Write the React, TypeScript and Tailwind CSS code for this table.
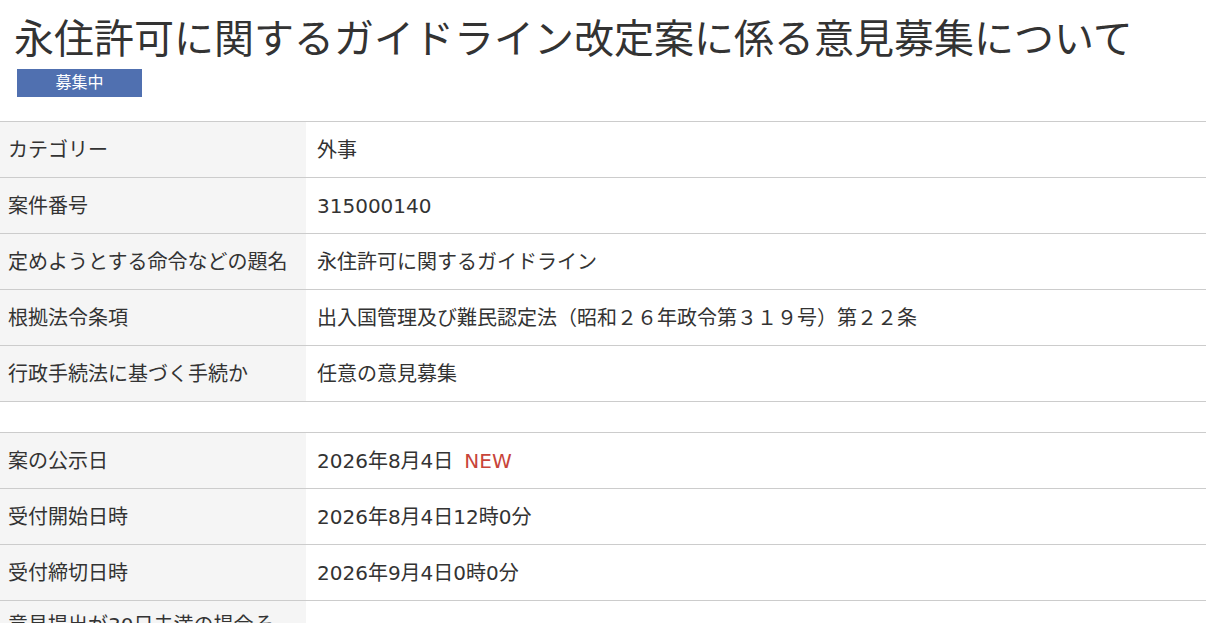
const font = {
  fontFamily: '"DejaVu Sans", "Noto Sans CJK JP", sans-serif',
};

type Row = { key: string; label: React.ReactNode; value: React.ReactNode };

const basic: Row[] = [
  { key: "cat", label: "カテゴリー", value: "外事" },
  { key: "no", label: "案件番号", value: "315000140" },
  { key: "title", label: "定めようとする命令などの題名", value: "永住許可に関するガイドライン" },
  { key: "law", label: "根拠法令条項", value: "出入国管理及び難民認定法（昭和２６年政令第３１９号）第２２条" },
  { key: "proc", label: "行政手続法に基づく手続か", value: "任意の意見募集" },
];

const dates: Row[] = [
  {
    key: "pub",
    label: "案の公示日",
    value: (
      <>
        2026年8月4日<span className="ml-[11px] text-[#c8443a]">NEW</span>
      </>
    ),
  },
  { key: "start", label: "受付開始日時", value: "2026年8月4日12時0分" },
  { key: "end", label: "受付締切日時", value: "2026年9月4日0時0分" },
  {
    key: "reason",
    label: (
      <>
        意見提出が30日未満の場合そ
        <br />
        の理由
      </>
    ),
    value: "",
  },
];

const Table = ({ rows }: { rows: Row[] }) => (
  <div className="border-t border-[#cccccc]">
    {rows.map((r) => (
      <div key={r.key} className="flex border-b border-[#cccccc] min-h-[56px]">
        <div className="w-[306px] shrink-0 bg-[#f5f5f5] pl-[8px] pr-[2px] py-[10px] flex items-center text-[20px] leading-[28px]">
          <span>{r.label}</span>
        </div>
        <div className="flex-1 pl-[11px] pr-2 py-[10px] flex items-center text-[20px] leading-[28px]">
          {r.value}
        </div>
      </div>
    ))}
  </div>
);

const App = () => {
  return (
    <div className="bg-white text-[#333333] min-h-screen" style={font}>
      <div className="pl-[14px] pt-[12px]">
        <h1
          className="text-[40px] leading-[48px] font-normal whitespace-nowrap"
          style={{ fontFamily: '"Noto Sans CJK JP", sans-serif' }}
        >
          永住許可に関するガイドライン改定案に係る意見募集について
        </h1>
        <div className="mt-[9px] ml-[3px] w-[125px] h-[28px] bg-[#5070b0] text-white text-[16px] leading-[28px] text-center">
          募集中
        </div>
      </div>
      <div className="mt-[24px]">
        <Table rows={basic} />
        <div className="h-[30px]" />
        <Table rows={dates} />
      </div>
    </div>
  );
};

export default App;
